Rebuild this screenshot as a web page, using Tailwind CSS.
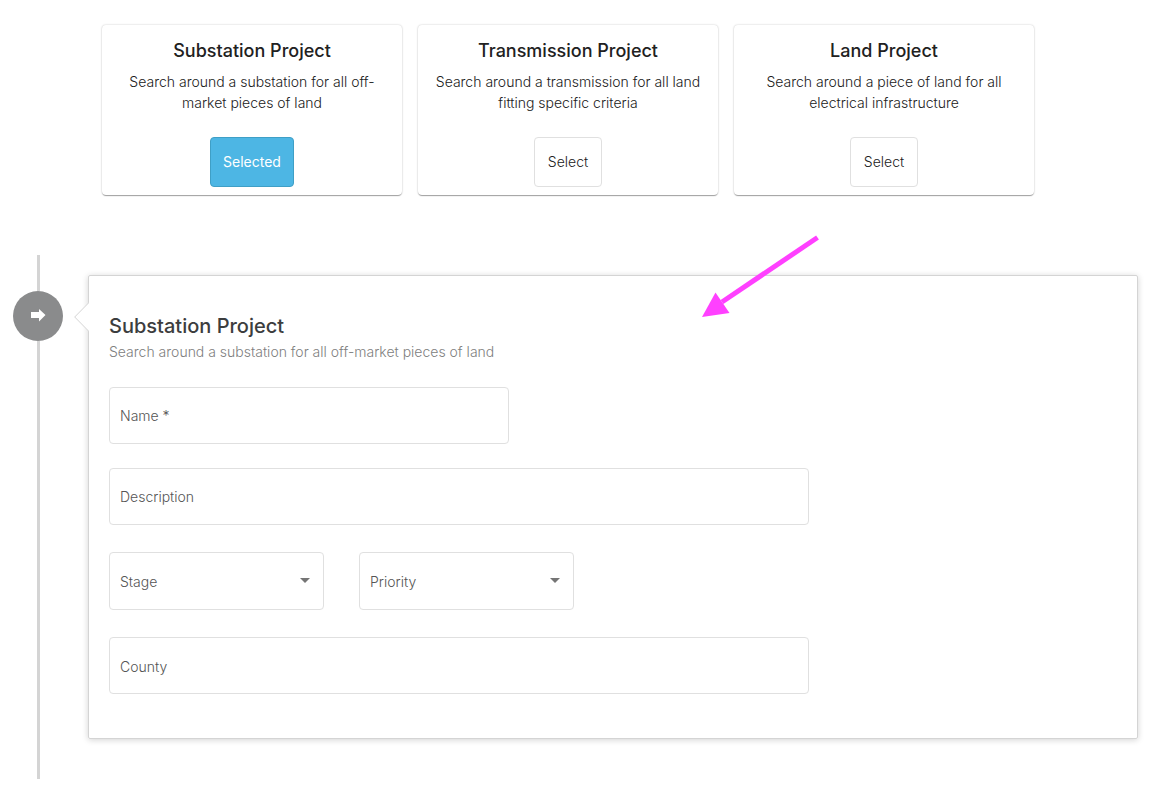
<!DOCTYPE html>
<html lang="en">
<head>
<meta charset="utf-8">
<meta name="viewport" content="width=device-width, initial-scale=1">
<title>New Project</title>
<script src="https://cdn.jsdelivr.net/npm/@tailwindcss/browser@4"></script>
</head>
<body class="bg-white font-['Inter',sans-serif] text-sm font-light text-[#212121]">
<main class="relative flex flex-col gap-[60px] pt-[25px] pb-7">
  <section aria-label="Project type" class="flex flex-wrap justify-center gap-4 pr-10">
    <article class="flex w-[300px] flex-col items-center rounded px-4 pt-3 pb-2 text-center shadow-[0_2px_1px_-1px_rgba(0,0,0,0.2),0_1px_1px_0_rgba(0,0,0,0.16),0_0_2px_0_rgba(0,0,0,0.24)]">
      <h2 class="text-lg leading-7 font-medium">Substation Project</h2>
      <p class="mt-1.5 mb-6 leading-[21px]">Search around a substation for all off-market pieces of land</p>
      <button type="button" class="h-[50px] rounded border border-[#3f9fc6] bg-[#4db6e4] px-3 font-normal text-white">Selected</button>
    </article>
    <article class="flex w-[300px] flex-col items-center rounded px-4 pt-3 pb-2 text-center shadow-[0_2px_1px_-1px_rgba(0,0,0,0.2),0_1px_1px_0_rgba(0,0,0,0.16),0_0_2px_0_rgba(0,0,0,0.24)]">
      <h2 class="text-lg leading-7 font-medium">Transmission Project</h2>
      <p class="mt-1.5 mb-6 leading-[21px]">Search around a transmission for all land fitting specific criteria</p>
      <button type="button" class="h-[50px] w-[68px] rounded border border-[#e0e0e0] bg-white">Select</button>
    </article>
    <article class="flex w-[300px] flex-col items-center rounded px-4 pt-3 pb-2 text-center shadow-[0_2px_1px_-1px_rgba(0,0,0,0.2),0_1px_1px_0_rgba(0,0,0,0.16),0_0_2px_0_rgba(0,0,0,0.24)]">
      <h2 class="text-lg leading-7 font-medium">Land Project</h2>
      <p class="mt-1.5 mb-6 leading-[21px]">Search around a piece of land for all electrical infrastructure</p>
      <button type="button" class="h-[50px] w-[68px] rounded border border-[#e0e0e0] bg-white">Select</button>
    </article>
  </section>

  <section aria-label="Project details" class="flex pr-[38px] pl-[13px]">
    <div class="mr-[25px] flex w-[50px] shrink-0 flex-col items-center">
      <div class="h-9 w-[3px] bg-[#d4d4d4]"></div>
      <div class="flex size-[50px] items-center justify-center rounded-full bg-[#8a8b8c]">
        <svg class="h-[14px] w-4" viewBox="0 0 16 14" fill="#fff" aria-hidden="true"><path d="M1 3h8V0l6.500 6L9 12.500V9H1z"/></svg>
      </div>
      <div class="w-[3px] grow bg-[#d4d4d4]"></div>
    </div>
    <div class="relative mt-5 mb-10 min-w-0 grow rounded-xs border border-[#d4d4d4] px-5 pt-9 pb-11 shadow-[0_1px_6px_rgba(0,0,0,0.175)]">
      <svg class="absolute top-[26px] -left-[15px] h-[30px] w-[15px]" viewBox="0 0 15 30" aria-hidden="true"><path d="M15 .5L.7 15 15 29.500" fill="#fff" stroke="#d4d4d4"/></svg>
      <h1 class="text-xl leading-7 font-medium text-[#3c3d3e]">Substation Project</h1>
      <p class="mt-0.5 mb-[25px] leading-5 text-[#808080]">Search around a substation for all off-market pieces of land</p>
      <form class="flex flex-col text-[#555]">
        <div class="relative max-w-[400px]">
          <label for="name" class="pointer-events-none absolute inset-y-0 left-[11px] flex items-center">Name *</label>
          <input id="name" type="text" required class="block h-[57px] w-full rounded border border-[#e0e0e0] px-2.5">
        </div>
        <div class="relative mt-6 max-w-[700px]">
          <label for="description" class="pointer-events-none absolute inset-y-0 left-[11px] flex items-center">Description</label>
          <input id="description" type="text" class="block h-[57px] w-full rounded border border-[#e0e0e0] px-2.5">
        </div>
        <div class="my-[27px] flex gap-[35px]">
          <div class="relative w-[215px]">
            <label for="stage" class="pointer-events-none absolute inset-y-0 left-[11px] flex items-center pt-0.5">Stage</label>
            <select id="stage" class="block h-[58px] w-full appearance-none rounded border border-[#e0e0e0] px-2.5"></select>
            <svg class="pointer-events-none absolute top-[26px] right-[14px] h-[5px] w-[10px]" viewBox="0 0 10 5" fill="#757575" aria-hidden="true"><path d="M0 0h10L5 5z"/></svg>
          </div>
          <div class="relative w-[215px]">
            <label for="priority" class="pointer-events-none absolute inset-y-0 left-[11px] flex items-center pt-0.5">Priority</label>
            <select id="priority" class="block h-[58px] w-full appearance-none rounded border border-[#e0e0e0] px-2.5"></select>
            <svg class="pointer-events-none absolute top-[26px] right-[14px] h-[5px] w-[10px]" viewBox="0 0 10 5" fill="#757575" aria-hidden="true"><path d="M0 0h10L5 5z"/></svg>
          </div>
        </div>
        <div class="relative max-w-[700px]">
          <label for="county" class="pointer-events-none absolute inset-y-0 left-[11px] flex items-center pt-0.5">County</label>
          <input id="county" type="text" class="block h-[57px] w-full rounded border border-[#e0e0e0] px-2.5">
        </div>
      </form>
    </div>
  </section>

  <!-- Pointer annotation over the page -->
  <svg class="pointer-events-none absolute top-[234px] left-[700px] h-[86px] w-[120px]" viewBox="0 0 120 86" fill="#ff40ff" aria-hidden="true">
    <path d="M117.500 3.500L22 68" stroke="#ff40ff" stroke-width="5"/>
    <path d="M2 83L15.500 58.500 29.500 79z"/>
  </svg>
</main>
</body>
</html>
